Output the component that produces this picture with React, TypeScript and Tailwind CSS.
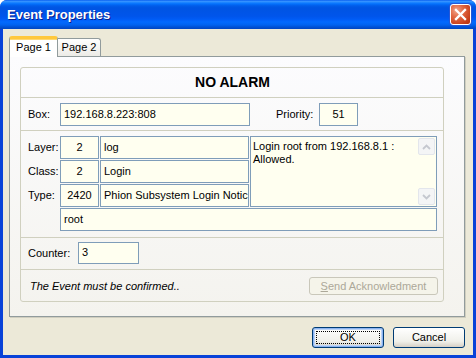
import React from "react";

const inputCls =
  "border border-[#7F9DB9] bg-[#FFFFF0] text-[11px] text-black leading-none flex items-center overflow-hidden whitespace-nowrap";

function CloseButton() {
  return (
    <div className="w-[21px] h-[21px] rounded-[3px] border border-white bg-[radial-gradient(circle_at_30%_30%,#F0A58C_0%,#E26A45_35%,#C8401B_75%,#B3300F_100%)] flex items-center justify-center shadow-[0_0_0_1px_#2757D6]">
      <svg width="13" height="13" viewBox="0 0 13 13">
        <path d="M2 2 L11 11 M11 2 L2 11" stroke="white" strokeWidth="2.3" strokeLinecap="square" />
      </svg>
    </div>
  );
}

function ScrollArrow({ up }: { up: boolean }) {
  return (
    <div className="w-[17px] h-[17px] rounded-[2px] border border-[#E3E6EC] bg-[#F4F5F6] flex items-center justify-center">
      <svg width="9" height="6" viewBox="0 0 9 6">
        <path
          d={up ? "M1 5 L4.5 1.5 L8 5" : "M1 1 L4.5 4.5 L8 1"}
          stroke="#C5C8CF"
          strokeWidth="1.8"
          fill="none"
        />
      </svg>
    </div>
  );
}

export default function App() {
  return (
    <div className="w-[476px] h-[358px] flex flex-col bg-[#0842D8] rounded-t-[7px] overflow-hidden font-['Liberation_Sans',Arial,sans-serif]">
      {/* Title bar */}
      <div className="h-[29px] shrink-0 flex items-center justify-between pl-[7px] pr-[5px] bg-[linear-gradient(to_bottom,#0058EE_0%,#3A93FF_4%,#288EFF_7%,#127DFF_10%,#036FFC_14%,#0262EE_18%,#0057E5_24%,#0054E3_30%,#0055EB_56%,#005BF5_66%,#026AFE_76%,#0062EF_86%,#0052D6_93%,#0045C0_100%)]">
        <span className="text-white font-bold text-[13px] [text-shadow:1px_1px_0_#0A1E8C] pt-[1px]">
          Event Properties
        </span>
        <CloseButton />
      </div>

      {/* Client area */}
      <div className="flex-1 mx-[3px] mb-[3px] bg-[#ECE9D8] flex flex-col">
        <div className="pl-[6px] pr-[8px] pt-[7px]">
          {/* Tabs */}
          <div className="flex items-end h-[20px]">
            <div className="relative w-[49px] h-[21px] -mb-[1px] bg-white border-x border-[#919B9C] rounded-t-[3px] border-t-[3px] border-t-[#FFC83C] shadow-[inset_0_1px_0_#FFD870] z-10 flex items-center justify-center text-[11px] text-black">
              <span className="pb-[1px]">Page 1</span>
            </div>
            <div className="w-[43px] h-[18px] bg-[linear-gradient(to_bottom,#FFFFFF,#ECEBE6)] border-t border-r border-[#919B9C] rounded-tr-[3px] flex items-center justify-center text-[11px] text-black">
              Page 2
            </div>
          </div>

          {/* Panel */}
          <div className="h-[261px] border border-[#919B9C] bg-[linear-gradient(to_bottom,#FCFCFE,#F4F3EE)] shadow-[1px_1px_0_#D0CEBF] pl-[10px] pt-[10px]">
            {/* Group */}
            <div className="w-[424px] h-[235px] border border-[#D0D0BF] rounded-[3px] flex flex-col">
              {/* Row 1 */}
              <div className="h-[30px] border-b border-[#D0D0BF] flex items-center justify-center">
                <span className="font-bold text-[14px] text-black pl-[1px] pb-[1px]">NO ALARM</span>
              </div>

              {/* Row 2 */}
              <div className="h-[33px] border-b border-[#D0D0BF] flex items-start pt-[5px] pl-[7px]">
                <span className="w-[32px] h-[23px] flex items-center text-[11px] text-black">Box:</span>
                <div className={`${inputCls} w-[190px] h-[23px] pl-[3px]`}>192.168.8.223:808</div>
                <span className="ml-[26px] w-[43px] h-[23px] flex items-center text-[11px] text-black">Priority:</span>
                <div className={`${inputCls} w-[39px] h-[23px] justify-center`}>51</div>
              </div>

              {/* Row 3 */}
              <div className="h-[107px] border-b border-[#D0D0BF] pt-[5px] pl-[7px]">
                <div className="grid grid-cols-[31px_39px_149px_187px] grid-rows-[23px_23px_23px_23px] gap-[1px]">
                  <span className="flex items-center text-[11px] text-black">Layer:</span>
                  <div className={`${inputCls} justify-center`}>2</div>
                  <div className={`${inputCls} pl-[3px]`}>log</div>
                  <div className="row-span-3 border border-[#7F9DB9] bg-[#FFFFF0] flex">
                    <div className="flex-1 pl-[2px] pt-[3px] text-[11px] leading-[13px] text-black">
                      Login root from 192.168.8.1 :
                      <br />
                      Allowed.
                    </div>
                    <div className="w-[17px] mr-[1px] mt-[1px] mb-[1px] flex flex-col justify-between">
                      <ScrollArrow up />
                      <ScrollArrow up={false} />
                    </div>
                  </div>

                  <span className="flex items-center text-[11px] text-black">Class:</span>
                  <div className={`${inputCls} justify-center`}>2</div>
                  <div className={`${inputCls} pl-[3px]`}>Login</div>

                  <span className="flex items-center text-[11px] text-black">Type:</span>
                  <div className={`${inputCls} justify-center`}>2420</div>
                  <div className={`${inputCls} pl-[3px]`}>Phion Subsystem Login Notic</div>

                  <span />
                  <div className={`${inputCls} col-span-3 pl-[3px]`}>root</div>
                </div>
              </div>

              {/* Row 4 */}
              <div className="h-[32px] border-b border-[#D0D0BF] flex items-start pt-[4px] pl-[7px]">
                <span className="w-[50px] h-[22px] flex items-center text-[11px] text-black">Counter:</span>
                <div className={`${inputCls} w-[61px] h-[22px] pl-[3px] !items-start pt-[4px]`}>3</div>
              </div>

              {/* Row 5 */}
              <div className="h-[31px] flex items-start justify-between pt-[7px] pl-[9px] pr-[5px]">
                <span className="h-[18px] flex items-center italic text-[11px] text-black">
                  The Event must be confirmed..
                </span>
                <div className="w-[129px] h-[18px] rounded-[3px] border border-[#C9C7BA] bg-[#F5F4EA] flex items-center justify-center text-[11px] text-[#ACA899]">
                  <span>
                    <span className="underline">S</span>end Acknowledment
                  </span>
                </div>
              </div>
            </div>
          </div>
        </div>

        {/* Buttons */}
        <div className="flex justify-end gap-[9px] pr-[8px] mt-[10px]">
          <div className="w-[72px] h-[21px] rounded-[3px] border border-[#003C74] bg-[linear-gradient(to_bottom,#FFFFFF,#F0F0EA_70%,#D6D0C5)] shadow-[inset_0_0_0_1px_#8CB4F2,inset_0_0_0_2px_#BCD4F6] flex items-center justify-center p-[3px]">
            <div className="w-full h-full border border-dotted border-black flex items-center justify-center text-[11px] text-black">
              OK
            </div>
          </div>
          <div className="w-[72px] h-[21px] rounded-[3px] border border-[#003C74] bg-[linear-gradient(to_bottom,#FFFFFF,#F0F0EA_70%,#D6D0C5)] flex items-center justify-center text-[11px] text-black">
            Cancel
          </div>
        </div>
      </div>
    </div>
  );
}
